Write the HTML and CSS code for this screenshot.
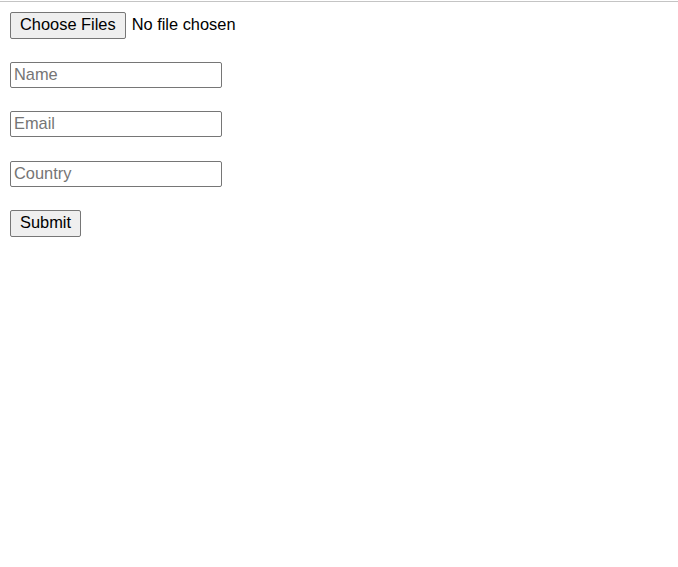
FILE: index.html
```html
<!DOCTYPE html>
<html>
<head>
<meta charset="utf-8">
<link rel="stylesheet" href="styles.css">
</head>
<body>
<form class="form">
  <div class="row"><input type="file" class="file" multiple></div>
  <div class="row"><input type="text" class="field" placeholder="Name"></div>
  <div class="row"><input type="text" class="field" placeholder="Email"></div>
  <div class="row row-country"><input type="text" class="field" placeholder="Country"></div>
  <div class="row"><button type="submit" class="submit">Submit</button></div>
</form>
</body>
</html>
```

FILE: styles.css
```css
html { border-top: 1px solid #c4c4c4; margin-top: 1px; }
body { margin: 0; padding: 10px 10px; font-family: "Liberation Sans", Arial, sans-serif; }
.form { display: flex; flex-direction: column; gap: 23px; }
.row { display: flex; }
.row-country { margin-top: 1px; }
.file, .field, .submit { font-family: "Liberation Sans", Arial, sans-serif; font-size: 16.4px; color: #000; }
.file { height: 27px; line-height: 24px; padding: 0; }
.file::file-selector-button {
  font: inherit; line-height: 20px; height: 27px; box-sizing: border-box; padding: 0 9px 3px; margin: 0 6px 0 0;
  background: #efefef; border: 1px solid #767676; border-radius: 2px; color: #000;
}
.submit {
  line-height: 20px; height: 27px; box-sizing: border-box; padding: 0 9px 3px;
  background: #efefef; border: 1px solid #767676; border-radius: 2px;
}
.field { width: 212px; height: 26px; box-sizing: border-box; border: 1px solid #767676; border-radius: 2px; padding: 0 3px 1px; }
.field::placeholder { color: #757575; }
```
